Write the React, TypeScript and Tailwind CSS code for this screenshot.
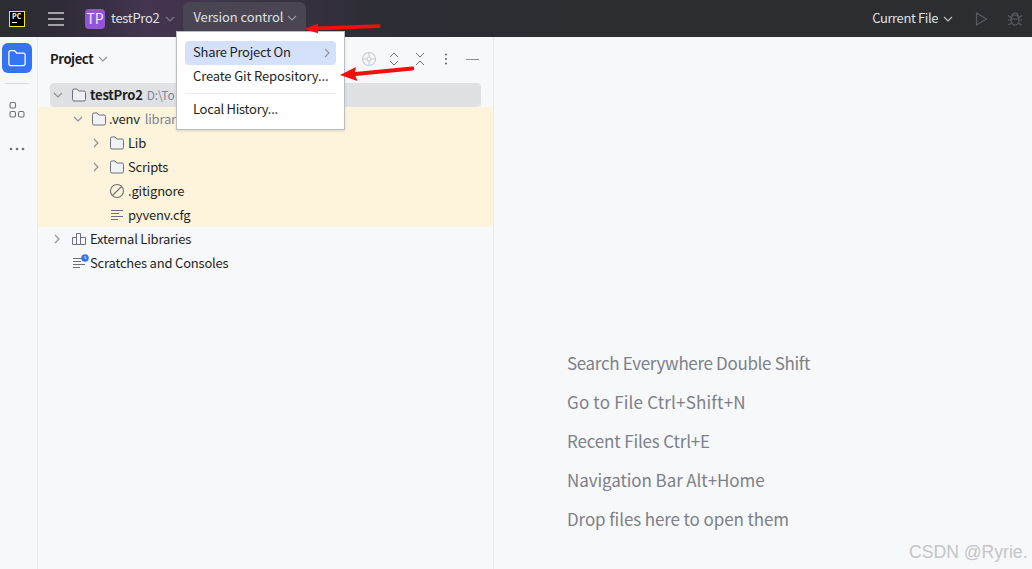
import React from "react";

const F = "[font-family:'Noto_Sans_CJK_SC','Noto_Sans',sans-serif]";

function Chevron({ dir = "down", className = "", color = "#8c8f96" }: { dir?: "down" | "right"; className?: string; color?: string }) {
  return (
    <svg width="12" height="12" viewBox="0 0 12 12" className={className} fill="none" stroke={color} strokeWidth="1.1">
      {dir === "down" ? <path d="M2 4l4 4 4-4" /> : <path d="M4 2l4 4-4 4" />}
    </svg>
  );
}

function Folder({ fill = "#f2f3f6" }: { fill?: string }) {
  return (
    <svg width="16" height="16" viewBox="0 0 16 16" fill={fill} stroke="#6c707e" strokeWidth="1">
      <path d="M1.500 3.500a1.500 1.500 0 0 1 1.500-1.500h3l1.700 2H13a1.500 1.500 0 0 1 1.500 1.500v7a1.500 1.500 0 0 1-1.500 1.500H3A1.500 1.500 0 0 1 1.500 12.500z" />
    </svg>
  );
}

function Lines() {
  return (
    <svg width="16" height="16" viewBox="0 0 16 16" stroke="#6c707e" strokeWidth="1" fill="none">
      <path d="M2 3.500h12M2 6.500h8M2 9.500h12M2 12.500h7" />
    </svg>
  );
}

function Row({ indent, chevron, icon, children, wide }: { indent: number; chevron?: "down" | "right"; icon: React.ReactNode; children: React.ReactNode; wide?: boolean }) {
  return (
    <div className="flex h-6 items-center">
      <div className="flex w-[14px] shrink-0 items-center justify-center" style={{ marginLeft: indent }}>
        {chevron && <Chevron dir={chevron} />}
      </div>
      <div className={`${wide ? "ml-[7px]" : "ml-[6px]"} flex w-4 shrink-0 items-center justify-center`}>{icon}</div>
      <div className="ml-[3px] flex items-center whitespace-nowrap text-[13px] tracking-[-0.2px] text-[#1e1f22]">{children}</div>
    </div>
  );
}

export default function App() {
  return (
    <div className={`relative flex h-[569px] w-[1032px] flex-col overflow-hidden bg-[#f7f8fa] ${F}`}>
      <header className="flex h-[37px] shrink-0 items-center bg-[linear-gradient(90deg,#2b2d30_0%,#2f2b38_6%,#43344f_14%,#3f3548_22%,#2d2d35_36%,#2b2d30_60%)]">
        <div className="ml-[9px] flex h-[16px] w-[16px] flex-col border border-[#f5e625] bg-black px-[2px] pt-[1px]">
          <span className="text-[7px] font-bold leading-[7px] text-white">PC</span>
          <span className="mt-[2px] h-px w-[5px] bg-white" />
        </div>
        <svg width="18" height="16" viewBox="0 0 18 16" className="ml-[22px]" stroke="#c9cbd0" strokeWidth="1.3">
          <path d="M1 2h16M1 8h16M1 14h16" />
        </svg>
        <div className="ml-[20px] flex h-5 w-5 items-center justify-center rounded-[4px] bg-[#9254d8] text-[14px] text-[#f3e8ff]">TP</div>
        <span className="mb-[2px] ml-[6px] text-[13px] tracking-[-0.3px] text-[#dfe1e5]">testPro2</span>
        <Chevron className="ml-[5px]" color="#7d7f85" />
        <div className="ml-[7px] mt-[2px] flex h-[31px] w-[123px] items-center self-start rounded-md bg-[#4a4552] pl-[10px]">
          <span className="mb-[2px] text-[13px] tracking-[-0.1px] text-[#dfe1e5]">Version control</span>
          <Chevron className="ml-[3px]" color="#9a9ca3" />
        </div>
        <div className="ml-auto flex items-center">
          <span className="mb-[2px] text-[13px] tracking-[-0.4px] text-[#dfe1e5]">Current File</span>
          <Chevron className="ml-[4px]" color="#c5c7cc" />
          <svg width="16" height="16" viewBox="0 0 16 16" fill="none" stroke="#5a5d63" strokeWidth="1.2" className="ml-[19px]">
            <path d="M3.500 2l10 6-10 6z" />
          </svg>
          <svg width="16" height="16" viewBox="0 0 16 16" fill="none" stroke="#5a5d63" strokeWidth="1.2" className="ml-[18px] mr-[9px]">
            <ellipse cx="8" cy="9" rx="4" ry="5" />
            <path d="M5 5.500C5 3 6 2 8 2s3 1 3 3.500M1 4.500l3 2M15 4.500l-3 2M1 9h3M15 9h-3M1.500 14l3-2M14.500 14l-3-2M4.500 8h7" />
          </svg>
        </div>
      </header>

      <div className="flex min-h-0 flex-1">
        <aside className="flex w-[38px] shrink-0 flex-col items-center border-r border-[#ebecf0] pt-[6px]">
          <div className="-ml-[4px] flex h-[30px] w-[30px] items-center justify-center rounded-md bg-[#3574f0]">
            <svg width="20" height="20" viewBox="0 0 16 16" fill="none" stroke="#fff" strokeWidth="1">
              <path d="M1.500 3.500a1.500 1.500 0 0 1 1.500-1.500h3l1.700 2H13a1.500 1.500 0 0 1 1.500 1.500v7a1.500 1.500 0 0 1-1.500 1.500H3A1.500 1.500 0 0 1 1.500 12.500z" />
            </svg>
          </div>
          <div className="-ml-[4px] mt-[10px] h-px w-[24px] bg-[#d9dade]" />
          <svg width="18" height="18" viewBox="0 0 18 18" fill="none" stroke="#6c707e" strokeWidth="1.1" className="-ml-[4px] mt-[17px]">
            <rect x="2" y="1.500" width="5.500" height="5.500" rx="1.500" />
            <rect x="2" y="10.500" width="5.500" height="5.500" rx="1.500" />
            <rect x="10.500" y="10.500" width="5.500" height="5.500" rx="1.500" />
          </svg>
          <svg width="18" height="4" viewBox="0 0 18 4" fill="#6c707e" className="-ml-[4px] mt-[28px]">
            <circle cx="3" cy="2" r="1.300" />
            <circle cx="9" cy="2" r="1.300" />
            <circle cx="15" cy="2" r="1.300" />
          </svg>
        </aside>

        <section className="flex w-[456px] shrink-0 flex-col border-r border-[#ebecf0]">
          <div className="flex h-[46px] shrink-0 items-center pb-[2px] pl-[12px]">
            <span className="text-[13px] font-semibold tracking-[-0.4px] text-[#1e1f22]">Project</span>
            <Chevron className="ml-[4px]" />
            <div className="ml-auto flex items-center pr-[14px]">
              <svg width="16" height="16" viewBox="0 0 16 16" fill="none" stroke="#c9cbd0" strokeWidth="1.1" className="mr-[11px]">
                <circle cx="8" cy="8" r="6.500" />
                <circle cx="8" cy="8" r="2" />
                <path d="M8 1.500v4M8 10.500v4M1.500 8h4M10.500 8h4" />
              </svg>
              <svg width="12" height="14" viewBox="0 0 12 14" fill="none" stroke="#6c707e" strokeWidth="1" className="mr-[14px]">
                <path d="M2 5l4-4 4 4M2 9l4 4 4-4" />
              </svg>
              <svg width="12" height="14" viewBox="0 0 12 14" fill="none" stroke="#6c707e" strokeWidth="1" className="mr-[18px]">
                <path d="M2 1l4 4 4-4M2 13l4-4 4 4" />
              </svg>
              <svg width="4" height="14" viewBox="0 0 4 14" fill="#6c707e" className="mr-[18px]">
                <circle cx="2" cy="2.500" r="1.100" />
                <circle cx="2" cy="7" r="1.100" />
                <circle cx="2" cy="11.500" r="1.100" />
              </svg>
              <div className="h-px w-[13px] bg-[#8c8f96]" />
            </div>
          </div>

          <div className="relative flex flex-col">
            <div className="mx-[12px] flex h-6 items-center rounded-[4px] bg-[#dfe1e5]">
              <Row indent={1} chevron="down" icon={<Folder fill="#eff0f3" />}>
                <span className="font-bold">testPro2</span>
                <span className="ml-[4px] text-[12px] text-[#818594]">D:\To</span>
              </Row>
            </div>
            <div className="bg-[#fdf4db]">
              <Row indent={33} chevron="down" icon={<Folder />}>
                <span className="-ml-[1px]">.venv</span>
                <span className="ml-[5px] text-[#818594]">library</span>
              </Row>
              <Row indent={51} chevron="right" icon={<Folder />}>Lib</Row>
              <Row indent={51} chevron="right" icon={<Folder />}>Scripts</Row>
              <Row
                indent={51}
                icon={
                  <svg width="16" height="16" viewBox="0 0 16 16" fill="none" stroke="#6c707e" strokeWidth="1.1">
                    <circle cx="8" cy="8" r="6.500" />
                    <path d="M3.500 12.500l9-9" />
                  </svg>
                }
              >
                .gitignore
              </Row>
              <Row indent={51} icon={<Lines />}>pyvenv.cfg</Row>
            </div>
            <Row
              indent={12}
              wide
              chevron="right"
              icon={
                <svg width="16" height="16" viewBox="0 0 16 16" fill="none" stroke="#6c707e" strokeWidth="1">
                  <path d="M1.500 6.500h4v7h-4zM5.500 2.500h4v11h-4zM9.500 6.500h5v7h-5z" />
                </svg>
              }
            >
              External Libraries
            </Row>
            <Row
              indent={12}
              wide
              icon={
                <div className="relative">
                  <Lines />
                  <svg width="8" height="8" viewBox="0 0 8 8" className="absolute -right-[2px] -top-[1px]">
                    <circle cx="4" cy="4" r="3.800" fill="#3574f0" />
                    <path d="M4 2v2.200h1.600" fill="none" stroke="#fff" strokeWidth="0.8" />
                  </svg>
                </div>
              }
            >
              Scratches and Consoles
            </Row>
          </div>
        </section>

        <main className="flex flex-1 flex-col gap-[16px] pl-[73px] pt-[314px] text-[17px] leading-[23px] text-[#7d8088]">
          <div className="tracking-[-0.33px]">Search Everywhere Double Shift</div>
          <div className="tracking-[0.18px]">Go to File Ctrl+Shift+N</div>
          <div className="tracking-[-0.16px]">Recent Files Ctrl+E</div>
          <div className="tracking-[-0.09px]">Navigation Bar Alt+Home</div>
          <div className="tracking-[-0.11px]">Drop files here to open them</div>
        </main>
      </div>

      <div className="absolute left-[176px] top-[31px] flex h-[99px] w-[169px] flex-col border border-[#b9bdc9] bg-white px-[8px] pt-[9px] shadow-sm">
        <div className="flex h-6 shrink-0 items-center justify-between rounded-[4px] bg-[#d5e1fb] pl-[8px] pr-[3px] text-[13px] text-[#1e1f22]">
          <span className="mb-[2px] tracking-[-0.25px]">Share Project On</span>
          <Chevron dir="right" />
        </div>
        <div className="flex h-6 shrink-0 items-center whitespace-nowrap pl-[8px] text-[13px] text-[#1e1f22]">
          <span className="mb-[2px] tracking-[-0.13px]">Create Git Repository...</span>
        </div>
        <div className="mt-[4px] h-px shrink-0 bg-[#ebecf0]" />
        <div className="mt-[4px] flex h-6 shrink-0 items-center pl-[8px] text-[13px] text-[#1e1f22]">
          <span className="mb-[2px] tracking-[-0.27px]">Local History...</span>
        </div>
      </div>

      <svg width="1032" height="100" viewBox="0 0 1032 100" className="pointer-events-none absolute left-0 top-0" fill="#f80d0d">
        <path d="M304 29l14-5.500 0 3 61-2.200c2-.1 2 3.400 0 3.700l-61 2.200 0 3z" />
        <path d="M340 75l16-8 -1 5 57-5.500c3-.3 3 3.700 .5 4l-57 5.500 2 5z" />
      </svg>

      <div className="absolute left-[909px] top-[540px] text-[17.6px] leading-[24px] text-[#c4c5c8] [font-family:'Liberation_Sans',sans-serif]">CSDN @Ryrie.</div>
    </div>
  );
}
